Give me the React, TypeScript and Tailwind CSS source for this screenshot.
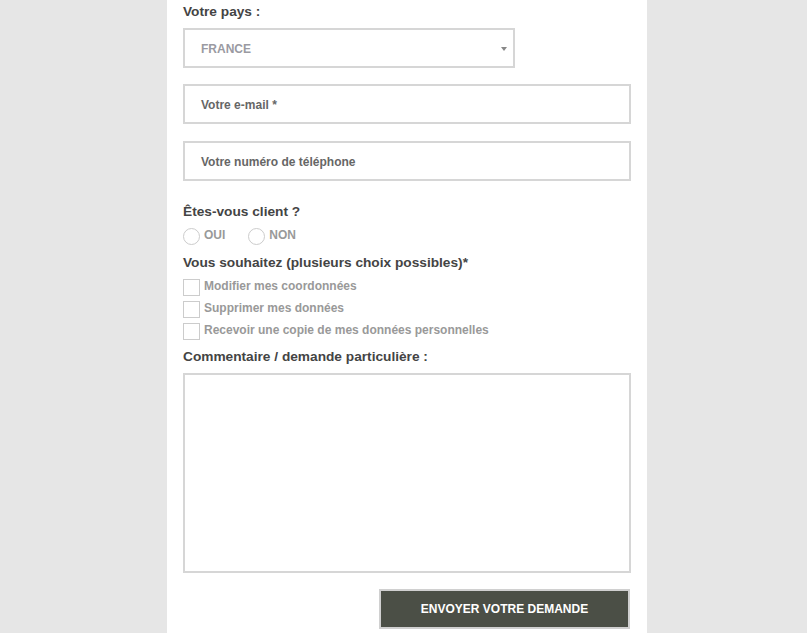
export default function App() {
  return (
    <div className="min-h-screen bg-[#e6e6e6] font-['Liberation_Sans',Arial,sans-serif]">
      <div className="ml-[167px] w-[480px] min-h-screen bg-white px-4 pt-[2px] pb-4">
        <p className="text-[13.7px] leading-[20px] font-bold text-[#444]">Votre pays :</p>
        <div className="mt-[6px] relative flex items-center w-[332px] h-[40px] border-2 border-[#d6d6d6] px-4">
          <span className="text-[12px] font-bold text-[#9a9aa2] mt-[1px]">FRANCE</span>
          <span className="absolute right-[6px] top-[17px] w-0 h-0 border-l-[3px] border-r-[3px] border-t-[4px] border-l-transparent border-r-transparent border-t-[#888]" />
        </div>
        <div className="mt-[16px] flex items-center h-[40px] border-2 border-[#d6d6d6] px-4">
          <span className="text-[12px] font-bold text-[#666] mt-[1px]">Votre e-mail *</span>
        </div>
        <div className="mt-[17px] flex items-center h-[40px] border-2 border-[#d6d6d6] px-4">
          <span className="text-[12px] font-bold text-[#666] mt-[1px]">Votre numéro de téléphone</span>
        </div>

        <p className="mt-[21px] text-[13.7px] leading-[20px] font-bold text-[#444]">Êtes-vous client ?</p>
        <div className="mt-[5px] flex items-center gap-[23px] h-[18px]">
          {['OUI', 'NON'].map((v) => (
            <label key={v} className="flex items-center gap-[4px]">
              <span className="w-[17px] h-[17px] rounded-full border border-[#ccc] bg-white" />
              <span className="text-[12px] font-bold text-[#999] -mt-[3px]">{v}</span>
            </label>
          ))}
        </div>

        <p className="mt-[8px] text-[13.7px] leading-[20px] font-bold text-[#444]">
          Vous souhaitez (plusieurs choix possibles)*
        </p>
        <div className="mt-[3px] flex flex-col">
          {['Modifier mes coordonnées', 'Supprimer mes données', 'Recevoir une copie de mes données personnelles'].map((v) => (
            <label key={v} className="flex items-center gap-[4px] h-[22px]">
              <span className="w-[17px] h-[17px] border border-[#ccc] bg-white" />
              <span className="text-[12px] font-bold text-[#999] -mt-[3px]">{v}</span>
            </label>
          ))}
        </div>

        <p className="mt-[5px] text-[13.7px] leading-[20px] font-bold text-[#444]">Commentaire / demande particulière :</p>
        <div className="mt-[6px] h-[200px] border-2 border-[#d6d6d6]" />

        <div className="mt-[16px] flex justify-end">
          <button className="mr-[1px] w-[251px] h-[40px] bg-[#4b4f46] border-2 border-[#d0d0d0] text-white text-[12px] font-bold uppercase">
            Envoyer votre demande
          </button>
        </div>
      </div>
    </div>
  )
}
